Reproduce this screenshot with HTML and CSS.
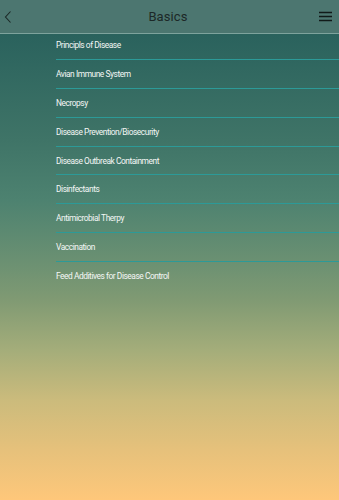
FILE: index.html
```html
<!DOCTYPE html>
<html>
<head>
<meta charset="utf-8">
<link rel="stylesheet" href="styles.css">
</head>
<body>
<div class="page">
  <header class="topbar">
    <button class="icon-btn back" aria-label="Back">
      <svg width="10" height="14" viewBox="0 0 10 14"><path d="M7.5 1.5 L2.5 7 L7.5 12.5" fill="none" stroke="#1b2826" stroke-width="1.1"/></svg>
    </button>
    <h1 class="title">Basics</h1>
    <button class="icon-btn menu" aria-label="Menu">
      <svg width="14" height="11" viewBox="0 0 14 11"><path d="M0 1.5H13M0 5.5H13M0 9.5H13" stroke="#111a19" stroke-width="1.5"/></svg>
    </button>
  </header>
  <ul class="list">
    <li class="item first">Principls of Disease</li>
    <li class="item">Avian Immune System</li>
    <li class="item">Necropsy</li>
    <li class="item">Disease Prevention/Biosecurity</li>
    <li class="item">Disease Outbreak Containment</li>
    <li class="item">Disinfectants</li>
    <li class="item">Antimicrobial Therpy</li>
    <li class="item">Vaccination</li>
    <li class="item last">Feed Additives for Disease Control</li>
  </ul>
</div>
</body>
</html>
```
FILE: styles.css
```css
html, body {
  margin: 0;
  padding: 0;
}
body {
  width: 339px;
  height: 500px;
  overflow: hidden;
  font-family: Roboto, "Liberation Sans", sans-serif;
}
.page {
  display: flex;
  flex-direction: column;
  height: 500px;
  background: linear-gradient(to bottom,
    #2a625d 0px,
    #2a625d 34px,
    #3f7467 140px,
    #4d8270 200px,
    #6a9072 260px,
    #809a73 300px,
    #a4ad7a 350px,
    #cbbb7c 400px,
    #e6c17b 450px,
    #fec77a 500px);
}
.topbar {
  height: 33px;
  border-bottom: 1px solid #7ea39d;
  background: #4c7670;
  display: flex;
  align-items: center;
  justify-content: space-between;
  padding: 0 6px 0 3px;
  flex-shrink: 0;
}
.icon-btn {
  background: none;
  border: 0;
  padding: 0;
  display: flex;
  align-items: center;
}
.back {
  margin-top: 1px;
}
.title {
  margin: 0 0 0 4px;
  font-size: 13px;
  font-weight: 400;
  color: #1c2827;
  letter-spacing: 0.1px;
}
.list {
  list-style: none;
  margin: 0;
  padding: 0 0 0 56px;
}
.item {
  height: 27.8px;
  display: flex;
  align-items: center;
  color: #f4f7f5;
  font-size: 8.4px;
  letter-spacing: -0.45px;
  border-bottom: 1px solid #2c9a98;
}
.item.first {
  height: 21.3px;
  padding-top: 4px;
  align-items: flex-start;
  line-height: 15px;
}
.item.last {
  border-bottom: 0;
}
```
